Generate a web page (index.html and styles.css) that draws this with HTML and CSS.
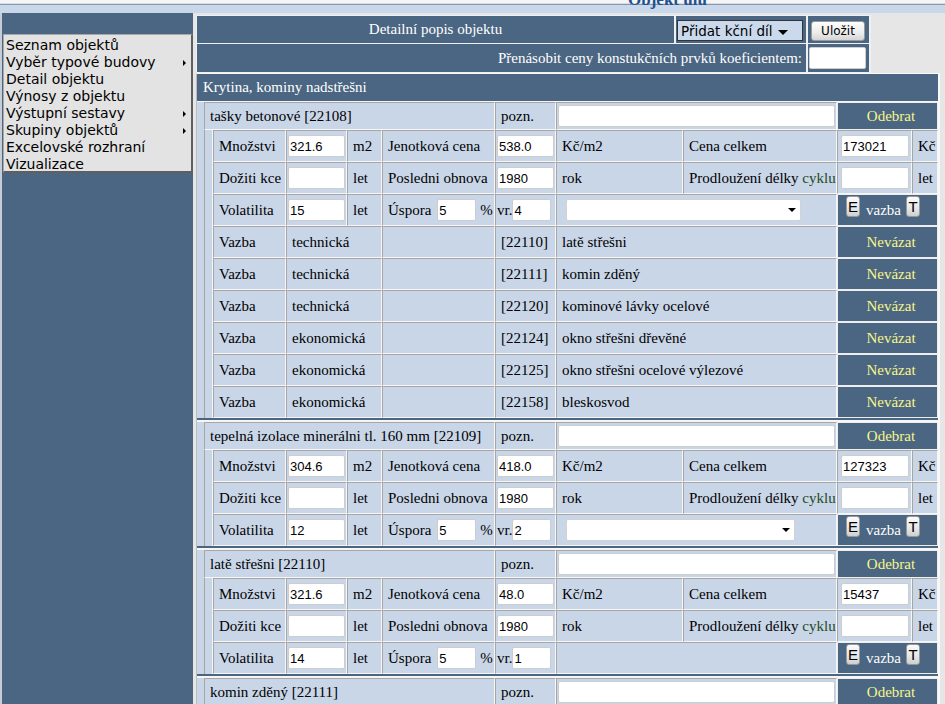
FILE: index.html
```html
<!DOCTYPE html>
<html lang="cs">
<head>
<meta charset="utf-8">
<title>Detail objektu</title>
<link rel="stylesheet" href="styles.css">
</head>
<body>
<div class="topbar"><span class="page-title">Objekt ulu</span></div>
<div class="layout">
  <aside class="sidebar"></aside>
  <main class="main">
    <div class="hdr">
      <div class="hcell hdr-title">Detailní popis objektu</div>
      <div class="hcell"><span class="menu-btn">Přidat kční díl<i class="caret"></i></span></div>
      <div class="hcell"><button class="btn" type="button">Uložit</button></div>
      <div class="hcell hdr-coef">Přenásobit ceny konstukčních prvků koeficientem:</div>
      <div class="hcell"><input class="coef" type="text"></div>
    </div>

    <div class="sec">
      <div class="sec-head">Krytina, kominy nadstřešni</div>

      <div class="el">
        <div class="trow">
          <div class="c">tašky betonové [22108]</div>
          <div class="c">pozn.</div>
          <div class="c ci"><input class="note" type="text"></div>
          <div class="c dk">Odebrat</div>
        </div>
        <div class="details">
          <div class="indent"></div>
          <div class="dgrid">
            <div class="c">Množstvi</div><div class="c ci"><input class="t" type="text" value="321.6"></div><div class="c">m2</div>
            <div class="c">Jenotková cena</div><div class="c ci"><input class="t" type="text" value="538.0"></div><div class="c">Kč/m2</div>
            <div class="c">Cena celkem</div><div class="c ci ci8"><input class="t wide" type="text" value="173021"></div><div class="c">Kč</div>

            <div class="c">Dožiti kce</div><div class="c ci"><input class="t" type="text"></div><div class="c">let</div>
            <div class="c">Posledni obnova</div><div class="c ci"><input class="t" type="text" value="1980"></div><div class="c">rok</div>
            <div class="c">Prodloužení délky&nbsp;<span class="cy">cyklu</span></div><div class="c ci ci8"><input class="t wide" type="text"></div><div class="c">let</div>

            <div class="c">Volatilita</div><div class="c ci"><input class="t" type="text" value="15"></div><div class="c">let</div>
            <div class="c">Úspora<input class="t sm usp" type="text" value="5"><span class="pct">%</span></div>
            <div class="c vr">vr.<input class="t sm" type="text" value="4"></div>
            <div class="c s2"><span class="sel"><i class="caret small"></i></span></div>
            <div class="c dk vz s2"><span class="eb">E</span><span class="vz-t">vazba</span><span class="eb">T</span></div>

            <div class="c">Vazba</div><div class="c s2">technická</div><div class="c"></div><div class="c">[22110]</div><div class="c s2">latě střešni</div><div class="c dk s2">Nevázat</div>
            <div class="c">Vazba</div><div class="c s2">technická</div><div class="c"></div><div class="c">[22111]</div><div class="c s2">komin zděný</div><div class="c dk s2">Nevázat</div>
            <div class="c">Vazba</div><div class="c s2">technická</div><div class="c"></div><div class="c">[22120]</div><div class="c s2">kominové lávky ocelové</div><div class="c dk s2">Nevázat</div>
            <div class="c">Vazba</div><div class="c s2">ekonomická</div><div class="c"></div><div class="c">[22124]</div><div class="c s2">okno střešni dřevěné</div><div class="c dk s2">Nevázat</div>
            <div class="c">Vazba</div><div class="c s2">ekonomická</div><div class="c"></div><div class="c">[22125]</div><div class="c s2">okno střešni ocelové výlezové</div><div class="c dk s2">Nevázat</div>
            <div class="c">Vazba</div><div class="c s2">ekonomická</div><div class="c"></div><div class="c">[22158]</div><div class="c s2">bleskosvod</div><div class="c dk s2">Nevázat</div>
          </div>
        </div>
      </div>

      <div class="el">
        <div class="trow">
          <div class="c">tepelná izolace minerálni tl. 160 mm [22109]</div>
          <div class="c">pozn.</div>
          <div class="c ci"><input class="note" type="text"></div>
          <div class="c dk">Odebrat</div>
        </div>
        <div class="details">
          <div class="indent"></div>
          <div class="dgrid">
            <div class="c">Množstvi</div><div class="c ci"><input class="t" type="text" value="304.6"></div><div class="c">m2</div>
            <div class="c">Jenotková cena</div><div class="c ci"><input class="t" type="text" value="418.0"></div><div class="c">Kč/m2</div>
            <div class="c">Cena celkem</div><div class="c ci ci8"><input class="t wide" type="text" value="127323"></div><div class="c">Kč</div>

            <div class="c">Dožiti kce</div><div class="c ci"><input class="t" type="text"></div><div class="c">let</div>
            <div class="c">Posledni obnova</div><div class="c ci"><input class="t" type="text" value="1980"></div><div class="c">rok</div>
            <div class="c">Prodloužení délky&nbsp;<span class="cy">cyklu</span></div><div class="c ci ci8"><input class="t wide" type="text"></div><div class="c">let</div>

            <div class="c">Volatilita</div><div class="c ci"><input class="t" type="text" value="12"></div><div class="c">let</div>
            <div class="c">Úspora<input class="t sm usp" type="text" value="5"><span class="pct">%</span></div>
            <div class="c vr">vr.<input class="t sm" type="text" value="2"></div>
            <div class="c s2"><span class="sel narrow"><i class="caret small"></i></span></div>
            <div class="c dk vz s2"><span class="eb">E</span><span class="vz-t">vazba</span><span class="eb">T</span></div>
          </div>
        </div>
      </div>

      <div class="el">
        <div class="trow">
          <div class="c">latě střešni [22110]</div>
          <div class="c">pozn.</div>
          <div class="c ci"><input class="note" type="text"></div>
          <div class="c dk">Odebrat</div>
        </div>
        <div class="details">
          <div class="indent"></div>
          <div class="dgrid">
            <div class="c">Množstvi</div><div class="c ci"><input class="t" type="text" value="321.6"></div><div class="c">m2</div>
            <div class="c">Jenotková cena</div><div class="c ci"><input class="t" type="text" value="48.0"></div><div class="c">Kč/m2</div>
            <div class="c">Cena celkem</div><div class="c ci ci8"><input class="t wide" type="text" value="15437"></div><div class="c">Kč</div>

            <div class="c">Dožiti kce</div><div class="c ci"><input class="t" type="text"></div><div class="c">let</div>
            <div class="c">Posledni obnova</div><div class="c ci"><input class="t" type="text" value="1980"></div><div class="c">rok</div>
            <div class="c">Prodloužení délky&nbsp;<span class="cy">cyklu</span></div><div class="c ci ci8"><input class="t wide" type="text"></div><div class="c">let</div>

            <div class="c">Volatilita</div><div class="c ci"><input class="t" type="text" value="14"></div><div class="c">let</div>
            <div class="c">Úspora<input class="t sm usp" type="text" value="5"><span class="pct">%</span></div>
            <div class="c vr">vr.<input class="t sm" type="text" value="1"></div>
            <div class="c s2"></div>
            <div class="c dk vz s2"><span class="eb">E</span><span class="vz-t">vazba</span><span class="eb">T</span></div>
          </div>
        </div>
      </div>

      <div class="el">
        <div class="trow">
          <div class="c">komin zděný [22111]</div>
          <div class="c">pozn.</div>
          <div class="c ci"><input class="note" type="text"></div>
          <div class="c dk">Odebrat</div>
        </div>
      </div>
    </div>
  </main>
</div>

<nav class="popup">
  <div class="mi">Seznam objektů</div>
  <div class="mi">Vyběr typové budovy<i class="sub"></i></div>
  <div class="mi">Detail objektu</div>
  <div class="mi">Výnosy z objektu</div>
  <div class="mi">Výstupní sestavy<i class="sub"></i></div>
  <div class="mi">Skupiny objektů<i class="sub"></i></div>
  <div class="mi">Excelovské rozhraní</div>
  <div class="mi">Vizualizace</div>
</nav>
</body>
</html>
```

FILE: styles.css
```css
* { box-sizing: border-box; }
html, body { margin: 0; height: 100%; overflow: hidden; }
body {
  background: #e6e6e6;
  font: 15px "Liberation Serif", "Times New Roman", serif;
  color: #000;
}

/* top strip */
.topbar {
  height: 13px;
  overflow: hidden;
  background: linear-gradient(#f5f5f5 0 3px, #d6dde8 3px 4px, #8a97a7 4px 5px, #c9d7ea 5px);
}
.page-title {
  display: block;
  padding-left: 628px;
  margin-top: -9px;
  font: bold 17px/17px "Liberation Serif", serif;
  color: #23508f;
}

.layout { display: flex; gap: 3px; height: calc(100% - 13px); }
.sidebar {
  flex: none;
  width: 193px;
  background: #4b6682;
  border-left: 2px solid #c5cdd7;
}
.main { flex: none; width: 744px; padding-top: 2px; }

/* header table */
.hdr {
  width: 675px;
  display: grid;
  grid-template-columns: 477px 130px 61px;
  grid-template-rows: 27px 28px;
  column-gap: 2px;
  row-gap: 1px;
  padding: 1px 2px 1px 1px;
  background: #eef0f3;
}
.hcell {
  background: #4b6682;
  color: #fff;
  display: flex;
  align-items: center;
}
.hdr-title { justify-content: center; }
.hdr-coef { grid-column: span 2; justify-content: flex-end; padding-right: 4px; }

.menu-btn {
  display: flex;
  align-items: center;
  width: 126px;
  height: 21px;
  margin: 2px 0 0 1px;
  padding-left: 3px;
  background: #cad9ec;
  border: 1px solid #333;
  font: 13.5px "DejaVu Sans", sans-serif;
  color: #000;
}
.caret {
  width: 0; height: 0;
  margin-left: 5px;
  margin-top: 3px;
  border-left: 5px solid transparent;
  border-right: 5px solid transparent;
  border-top: 5px solid #000;
}
.caret.small {
  margin: 0;
  border-left-width: 4px;
  border-right-width: 4px;
  border-top-width: 4px;
}
.btn {
  width: 54px;
  height: 20px;
  margin: 2px 0 0 3px;
  padding: 0;
  border: 1px solid #9a9a9a;
  border-radius: 3px;
  background: linear-gradient(#fdfdfd, #ececec 60%, #d4d4d4);
  font: 12px "DejaVu Sans", sans-serif;
  color: #000;
}
.coef {
  width: 57px;
  height: 22px;
  margin-left: 1px;
  border: 1px solid #cfcfcf;
  border-radius: 2px;
  background: #fff;
  outline: none;
}

/* section */
.sec {
  width: 744px;
  border-left: 1px solid #bdbdbd;
  border-right: 2px solid #f8f8f8;
  border-top: 1px solid #f8f8f8;
  background: #4b6682;
}
.sec-head {
  height: 27px;
  padding-left: 6px;
  color: #fff;
  display: flex;
  align-items: center;
}
.el {
  background: #c9d6e8;
  border-top: 1px solid #f6f6f6;
  padding-left: 7px;
}
.el + .el { margin-top: 2px; border-top-width: 2px; }

.trow {
  display: grid;
  grid-template-columns: 291px 61px 281px 101px;
  height: 28px;
}
.details { display: flex; }
.indent {
  flex: none;
  width: 9px;
  border-left: 1px solid #a4a4a4;
  border-right: 1px solid #f6f6f6;
}
.dgrid {
  display: grid;
  grid-template-columns: 73px 61px 35px 113px 61px 127px 154px 75px 26px;
  grid-auto-rows: 32px;
}

.c {
  min-width: 0;
  display: flex;
  align-items: center;
  padding: 0 5px;
  white-space: nowrap;
  overflow: hidden;
  border: 1px solid;
  border-color: #a6a6a6 #f6f6f6 #f6f6f6 #a6a6a6;
}
.s2 { grid-column: span 2; }
.ci { padding: 0 1px; }
.ci8 { padding-left: 3px; }
.vr { padding-left: 1px; }
.c.dk {
  background: #4b6682;
  border-color: #eeeeee;
  color: #f6f68a;
  justify-content: center;
  padding: 0 0 0 7px;
}
.c.vz {
  justify-content: flex-start;
  padding-left: 8px;
  color: #fff;
}
.cy { color: #24492a; }

input { font: 13px "Liberation Sans", Arial, sans-serif; color: #000; }
.t {
  width: 57px;
  height: 22px;
  padding: 0 1px;
  border: 1px solid #cdcdcd;
  border-radius: 2px;
  background: #fff;
  outline: none;
}
.t.wide { width: 68px; }
.t.sm { width: 39px; }
.t.usp { margin-left: 6px; }
.pct { margin-left: 4px; }
.note {
  width: 279px;
  height: 22px;
  border: 1px solid #cdcdcd;
  border-radius: 2px;
  background: #fff;
  outline: none;
}

.sel {
  display: flex;
  align-items: center;
  justify-content: flex-end;
  width: 235px;
  height: 22px;
  margin-left: 4px;
  padding-right: 4px;
  border: 1px solid #d2d2d2;
  border-radius: 2px;
  background: #fff;
}
.sel.narrow { width: 229px; }

.eb {
  align-self: flex-start;
  margin-top: 1px;
  width: 14px;
  height: 21px;
  display: flex;
  align-items: center;
  justify-content: center;
  border: 1px solid #999;
  border-radius: 3px;
  background: linear-gradient(#fbfbfb, #e6e6e6 60%, #cfcfcf);
  font: 15px "Liberation Sans", Arial, sans-serif;
  color: #000;
}
.vz-t { margin: 0 5px 0 6px; }

/* popup menu */
.popup {
  position: absolute;
  left: 3px;
  top: 34px;
  width: 190px;
  height: 139px;
  background: #e3e3e3;
  border-top: 1px solid #a8a8a8;
  border-left: 1px solid #a8a8a8;
  border-right: 2px solid #5f5f5f;
  border-bottom: 2px solid #5f5f5f;
  padding: 2px 5px 0 2px;
  font: 14px/17px "DejaVu Sans", sans-serif;
  color: #000;
}
.mi {
  height: 17px;
  display: flex;
  align-items: center;
  justify-content: space-between;
  white-space: nowrap;
}
.sub {
  width: 0; height: 0;
  border-left: 3px solid #000;
  border-top: 3px solid transparent;
  border-bottom: 3px solid transparent;
}
```
